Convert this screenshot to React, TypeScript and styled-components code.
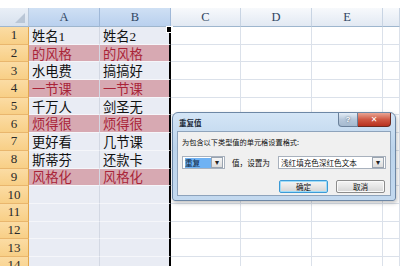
import React from "react";
import styled, { createGlobalStyle } from "styled-components";

type RowData = { a: string; b: string; red: boolean };

const cols = ["A", "B", "C", "D", "E", ""];

const data: RowData[] = [
  { a: "姓名1", b: "姓名2", red: false },
  { a: "的风格", b: "的风格", red: true },
  { a: "水电费", b: "搞搞好", red: false },
  { a: "一节课", b: "一节课", red: true },
  { a: "千万人", b: "剑圣无", red: false },
  { a: "烦得很", b: "烦得很", red: true },
  { a: "更好看", b: "几节课", red: false },
  { a: "斯蒂芬", b: "还款卡", red: false },
  { a: "风格化", b: "风格化", red: true },
  { a: "", b: "", red: false },
  { a: "", b: "", red: false },
  { a: "", b: "", red: false },
  { a: "", b: "", red: false },
  { a: "", b: "", red: false },
];

export default function App() {
  return (
    <>
      <GlobalStyle />
      <Screen>
        <TopStrip />
        <Sheet>
          <Corner />
          {cols.map((c, i) => (
            <ColHead key={i} $sel={i < 2}>
              {c}
            </ColHead>
          ))}
          {data.map((row, r) => (
            <React.Fragment key={r}>
              <RowHead>{r + 1}</RowHead>
              <Cell $sel $red={row.red}>
                {row.a}
              </Cell>
              <Cell $sel $red={row.red} $edge>
                {row.b}
                {r === 0 && <Handle />}
              </Cell>
              <Cell />
              <Cell />
              <Cell />
              <Cell />
            </React.Fragment>
          ))}
        </Sheet>

        <Dialog>
          <TitleBar>
            <Title>重复值</Title>
            <Caption>
              <HelpBtn>?</HelpBtn>
              <CloseBtn>✕</CloseBtn>
            </Caption>
          </TitleBar>
          <Content>
            <Prompt>为包含以下类型值的单元格设置格式:</Prompt>
            <FieldRow>
              <Combo $w={43}>
                <ComboText>
                  <Picked>重复</Picked>
                </ComboText>
                <Arrow>▾</Arrow>
              </Combo>
              <Label>值，设置为</Label>
              <Combo $w={109}>
                <ComboText>浅红填充色深红色文本</ComboText>
                <Arrow>▾</Arrow>
              </Combo>
            </FieldRow>
            <ButtonRow>
              <Btn $focus>确定</Btn>
              <Btn>取消</Btn>
            </ButtonRow>
          </Content>
        </Dialog>
      </Screen>
    </>
  );
}

const GlobalStyle = createGlobalStyle`
  body {
    margin: 0;
    background: #fff;
    font-family: "Liberation Serif", "Noto Sans CJK SC", serif;
  }
`;

const Screen = styled.div`
  position: relative;
  width: 400px;
  height: 266px;
  overflow: hidden;
  background: #fff;
`;

const TopStrip = styled.div`
  height: 8px;
  background: #fff;
`;

const Sheet = styled.div`
  display: grid;
  grid-template-columns: 29px 71px 71px 70px 71px 71px 1fr;
  grid-template-rows: 19px repeat(14, 17.7px);
`;

const Corner = styled.div`
  position: relative;
  background: linear-gradient(#e9eff7, #d7e1ee);
  border-right: 1px solid #b7c7da;
  border-bottom: 1px solid #9eb6ce;
  &::after {
    content: "";
    position: absolute;
    right: 3px;
    bottom: 3px;
    border-left: 10px solid transparent;
    border-bottom: 10px solid #b9c6d6;
  }
`;

const ColHead = styled.div<{ $sel?: boolean }>`
  display: flex;
  align-items: center;
  justify-content: center;
  font-family: "Liberation Serif", serif;
  font-size: 12.5px;
  color: #2f4562;
  background: ${(p) =>
    p.$sel
      ? "linear-gradient(#cfe0f4, #b9d0ee)"
      : "linear-gradient(#f7f9fc, #e2e9f3)"};
  border-right: 1px solid ${(p) => (p.$sel ? "#9fb8d8" : "#c8d4e3")};
  border-bottom: 1px solid #9eb6ce;
`;

const RowHead = styled.div`
  display: flex;
  align-items: center;
  justify-content: center;
  font-family: "Liberation Serif", serif;
  font-size: 13px;
  color: #2a2a2a;
  background: linear-gradient(#fbdca4, #f8cf86);
  border-right: 1px solid #e2a64c;
  border-bottom: 1px solid #e9b66d;
`;

const Cell = styled.div<{ $sel?: boolean; $red?: boolean; $edge?: boolean }>`
  position: relative;
  display: flex;
  align-items: center;
  padding-left: 3px;
  font-family: "Liberation Serif", "Noto Sans CJK SC", serif;
  font-size: 13.3px;
  white-space: nowrap;
  color: ${(p) => (p.$red ? "#a92438" : "#111")};
  background: ${(p) => (p.$red ? "#d7a9b2" : p.$sel ? "#e9ecf4" : "#fff")};
  border-right: ${(p) =>
    p.$edge ? "2px solid #000" : `1px solid ${p.$sel ? "#d3d8e3" : "#dbe1ea"}`};
  border-bottom: 1px solid ${(p) => (p.$sel ? "#f5f6fa" : "#dbe1ea")};
`;

const Handle = styled.span`
  position: absolute;
  right: -4px;
  top: -1px;
  width: 5px;
  height: 5px;
  background: #000;
  border: 1px solid #fff;
`;

const Dialog = styled.div`
  position: absolute;
  left: 172px;
  top: 112px;
  width: 224px;
  height: 89px;
  box-sizing: border-box;
  display: flex;
  flex-direction: column;
  padding: 0 4px 4px;
  background: linear-gradient(#d4e5f6, #bcd4ec 40%, #c3d9ef);
  border: 1px solid #6d87a5;
  border-radius: 6px 6px 3px 3px;
  box-shadow: 1px 2px 4px rgba(0, 0, 0, 0.25);
  font-family: "Noto Sans CJK SC", "Liberation Sans", sans-serif;
`;

const TitleBar = styled.div`
  height: 18px;
  display: flex;
  align-items: flex-start;
  justify-content: space-between;
`;

const Title = styled.span`
  margin-top: 5px;
  padding-left: 2px;
  font-size: 7.5px;
  line-height: 10px;
  font-weight: bold;
  color: #1c2a3a;
`;

const Caption = styled.div`
  display: flex;
`;

const HelpBtn = styled.div`
  width: 18px;
  height: 13px;
  display: flex;
  align-items: center;
  justify-content: center;
  font-family: "Liberation Sans", sans-serif;
  font-size: 8px;
  font-weight: bold;
  color: #fff;
  text-shadow: 0 0 2px #345;
  background: linear-gradient(#e4edf7, #b7c8db 50%, #a5b9cf);
  border: 1px solid #6a809a;
  border-top: none;
  border-radius: 0 0 0 4px;
`;

const CloseBtn = styled.div`
  width: 32px;
  height: 13px;
  display: flex;
  align-items: center;
  justify-content: center;
  font-family: "DejaVu Sans", sans-serif;
  font-size: 8px;
  font-weight: bold;
  color: #fff;
  background: linear-gradient(#e9a493, #cf5843 50%, #b8321f);
  border: 1px solid #6b2a20;
  border-top: none;
  border-left: none;
  border-radius: 0 0 4px 0;
`;

const Content = styled.div`
  flex: 1;
  display: flex;
  flex-direction: column;
  padding: 5px 4px 0 4px;
  background: #f0f0f0;
  border: 1px solid #8ea3bb;
`;

const Prompt = styled.div`
  font-size: 7.2px;
  line-height: 11px;
  color: #111;
  white-space: nowrap;
`;

const FieldRow = styled.div`
  display: flex;
  align-items: center;
  margin-top: 8px;
  height: 13px;
`;

const Combo = styled.div<{ $w: number }>`
  width: ${(p) => p.$w}px;
  height: 13px;
  box-sizing: border-box;
  display: flex;
  align-items: center;
  padding: 1px;
  background: #fff;
  border: 1px solid #a8b1bd;
`;

const ComboText = styled.div`
  flex: 1;
  font-size: 7.6px;
  line-height: 10px;
  color: #111;
  white-space: nowrap;
  overflow: hidden;
  padding-left: 1px;
`;

const Picked = styled.span`
  display: inline-block;
  width: 27px;
  background: #6fb2f3;
  color: #0c2340;
`;

const Arrow = styled.div`
  width: 10px;
  height: 9px;
  display: flex;
  align-items: center;
  justify-content: center;
  font-family: "DejaVu Sans", sans-serif;
  font-size: 8px;
  color: #222;
  background: linear-gradient(#f6f6f6, #dcdcdc);
  border: 1px solid #9aa4b0;
`;

const Label = styled.div`
  margin: 0 8px 0 7px;
  font-size: 7.6px;
  color: #111;
  white-space: nowrap;
`;

const ButtonRow = styled.div`
  display: flex;
  justify-content: flex-end;
  gap: 8px;
  margin-top: 11px;
  padding-right: 1px;
`;

const Btn = styled.div<{ $focus?: boolean }>`
  width: 49px;
  height: 13px;
  box-sizing: border-box;
  display: flex;
  align-items: center;
  justify-content: center;
  font-size: 7.6px;
  color: #111;
  background: linear-gradient(#f5f5f5, #e6e6e6 50%, #d5d5d5);
  border: 1px solid ${(p) => (p.$focus ? "#3c9ad6" : "#8c8c8c")};
  border-radius: 2px;
  box-shadow: ${(p) => (p.$focus ? "inset 0 0 0 1px #9fdcf8" : "inset 0 0 0 1px #fafafa")};
`;
